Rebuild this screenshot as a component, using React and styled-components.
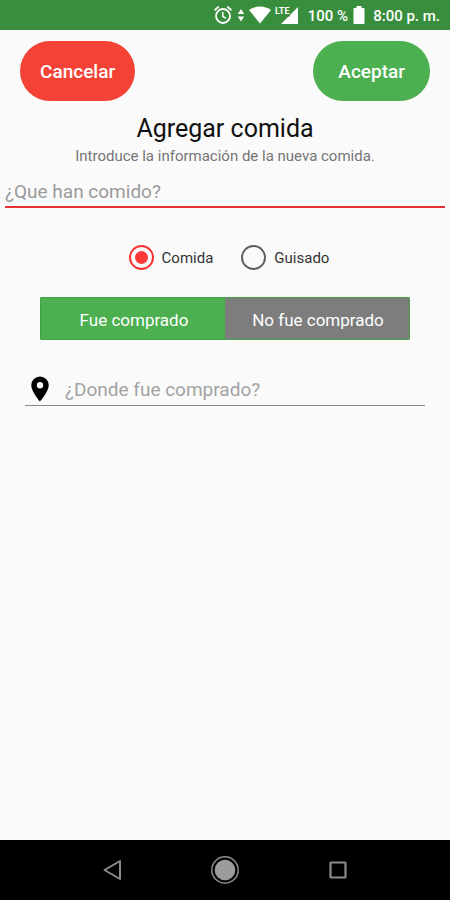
import React from "react";
import styled, { createGlobalStyle } from "styled-components";

const App = () => {
  const [type, setType] = React.useState("comida");
  const [bought, setBought] = React.useState(true);

  return (
    <Screen>
      <GlobalStyle />
      <StatusBar>
        <StatusIcons>
          <AlarmIcon />
          <DataIcon />
          <WifiIcon />
          <SignalIcon />
        </StatusIcons>
        <Percent>100 %</Percent>
        <BatteryIcon />
        <Clock>8:00 p. m.</Clock>
      </StatusBar>

      <Content>
        <Actions>
          <PillButton type="button" $color="#f44336">
            Cancelar
          </PillButton>
          <PillButton type="button" $color="#4caf50" $wide>
            Aceptar
          </PillButton>
        </Actions>

        <Title>Agregar comida</Title>
        <Subtitle>Introduce la información de la nueva comida.</Subtitle>
        <FoodInput aria-label="¿Que han comido?" placeholder="¿Que han comido?" />

        <RadioRow role="radiogroup" aria-label="Tipo">
          <RadioLabel>
            <Radio
              type="radio"
              name="type"
              checked={type === "comida"}
              onChange={() => setType("comida")}
            />
            Comida
          </RadioLabel>
          <RadioLabel>
            <Radio
              type="radio"
              name="type"
              checked={type === "guisado"}
              onChange={() => setType("guisado")}
            />
            Guisado
          </RadioLabel>
        </RadioRow>

        <Segment>
          <SegmentButton type="button" $on={bought} aria-pressed={bought} onClick={() => setBought(true)}>
            Fue comprado
          </SegmentButton>
          <SegmentButton type="button" $on={!bought} aria-pressed={!bought} onClick={() => setBought(false)}>
            No fue comprado
          </SegmentButton>
        </Segment>

        <PlaceRow>
          <PinIcon />
          <PlaceInput aria-label="¿Donde fue comprado?" placeholder="¿Donde fue comprado?" />
        </PlaceRow>
      </Content>

      <NavBar>
        <NavButton type="button" aria-label="Atrás">
          <svg width="28" height="28" viewBox="0 0 28 28">
            <path d="M22 5v18L6.500 14z" fill="none" stroke="#8c8c8c" strokeWidth="2" strokeLinejoin="round" />
          </svg>
        </NavButton>
        <NavButton type="button" aria-label="Inicio">
          <svg width="28" height="28" viewBox="0 0 28 28">
            <circle cx="14" cy="14" r="13.2" fill="none" stroke="#8c8c8c" strokeWidth="1.5" />
            <circle cx="14" cy="14" r="10.3" fill="#9c9c9c" />
          </svg>
        </NavButton>
        <NavButton type="button" aria-label="Recientes">
          <svg width="28" height="28" viewBox="0 0 28 28">
            <rect x="6.5" y="6.5" width="15" height="15" rx="0.5" fill="none" stroke="#8c8c8c" strokeWidth="2.2" />
          </svg>
        </NavButton>
      </NavBar>
    </Screen>
  );
};

const AlarmIcon = () => (
  <svg width="20" height="20" viewBox="0 0 20 20" fill="none" stroke="#fff" strokeWidth="1.8">
    <circle cx="10" cy="11" r="7" />
    <path d="M1.5 5.2 5.8 1.6M18.5 5.2 14.2 1.6" />
    <path d="M9.8 7v4.4l3.2 1.900" strokeWidth="1.5" />
  </svg>
);

const DataIcon = () => (
  <svg width="8" height="20" viewBox="0 0 8 20" fill="#fff">
    <path d="M4 4l3.2 5H.8zM4 16.5l3.2-5H.8z" />
  </svg>
);

const WifiIcon = () => (
  <svg width="22" height="20" viewBox="0 0 22 20" fill="#fff">
    <path d="M11 18.500 0 5C3 2.700 6.800 1.500 11 1.500S19 2.700 22 5z" />
  </svg>
);

// 신호 아이콘 위에 LTE 글자
const SignalIcon = () => (
  <svg width="24" height="20" viewBox="0 0 24 20" fill="#fff">
    <path d="M23 2v17H6l7.500-7.500H15V10z" />
    <text x="0" y="9" fontFamily="Liberation Sans Narrow, Roboto, sans-serif" fontSize="9" fontWeight="700">
      LTE
    </text>
  </svg>
);

const BatteryIcon = () => (
  <svg width="12" height="20" viewBox="0 0 12 20" fill="#fff">
    <path d="M3.500 1h5v2H10.500a1 1 0 0 1 1 1v14a1 1 0 0 1-1 1H1.500a1 1 0 0 1-1-1V4a1 1 0 0 1 1-1h2z" />
  </svg>
);

const PinIcon = () => (
  <svg width="18" height="26" viewBox="0 0 18 26">
    <path
      fillRule="evenodd"
      d="M9 .5A8.700 8.700 0 0 0 .3 9.200C.3 15.500 9 25.500 9 25.500s8.700-10 8.700-16.300A8.700 8.700 0 0 0 9 .5zM9 12.500a3.200 3.200 0 1 1 0-6.400 3.200 3.200 0 0 1 0 6.400z"
    />
  </svg>
);

const GlobalStyle = createGlobalStyle`
  * {
    box-sizing: border-box;
  }
  body {
    margin: 0;
    background-color: #fafafa;
    font-family: Roboto, "Liberation Sans", sans-serif;
  }
  button, input {
    font-family: inherit;
  }
`;

const Screen = styled.div`
  display: flex;
  flex-direction: column;
  min-height: 100vh;
`;

const StatusBar = styled.header`
  display: flex;
  align-items: center;
  justify-content: flex-end;
  height: 30px;
  padding: 0 10px;
  background-color: #388e3c;
  color: #fff;
  font-size: 15px;
  font-weight: 500;
`;

const StatusIcons = styled.div`
  display: flex;
  gap: 4px;
`;

const Percent = styled.span`
  margin: 2px 5px 0 9px;
`;

const Clock = styled.span`
  margin: 2px 0 0 8px;
`;

const Content = styled.main`
  display: flex;
  flex: 1;
  flex-direction: column;
  padding: 11px 5px 0;
`;

const Actions = styled.div`
  display: flex;
  justify-content: space-between;
  padding: 0 15px;
`;

const PillButton = styled.button`
  height: 60px;
  padding: 0 ${(props) => (props.$wide ? 25 : 20)}px;
  border: none;
  border-radius: 30px;
  background-color: ${(props) => props.$color};
  color: #fff;
  font-size: 19px;
  font-weight: 500;
`;

const Title = styled.h1`
  margin: 13px 0 0;
  color: #111;
  font-size: 25px;
  font-weight: 400;
  line-height: 30px;
  text-align: center;
`;

const Subtitle = styled.p`
  margin: 3px 0 0;
  color: #757575;
  font-size: 15px;
  line-height: 18px;
  text-align: center;
`;

const FoodInput = styled.input`
  width: 100%;
  height: 38px;
  margin-top: 5px;
  padding: 6px 0 0;
  border: none;
  border-bottom: 2px solid #e53035;
  outline: none;
  background: transparent;
  font-size: 19px;

  &::placeholder {
    color: #9a9a9a;
  }
`;

const RadioRow = styled.div`
  display: flex;
  justify-content: center;
  gap: 28px;
  margin-top: 37px;
  padding-left: 8px;
`;

const RadioLabel = styled.label`
  display: flex;
  align-items: center;
  gap: 8px;
  color: #333;
  font-size: 15px;
`;

const Radio = styled.input`
  display: grid;
  place-items: center;
  width: 25px;
  height: 25px;
  margin: 0;
  border: 2px solid #5f5f5f;
  border-radius: 50%;
  appearance: none;

  &:checked {
    border-color: #f9302f;
  }
  &:checked::before {
    content: "";
    width: 13px;
    height: 13px;
    border-radius: 50%;
    background-color: #fb3b3a;
  }
`;

const Segment = styled.div`
  display: flex;
  height: 43px;
  margin: 27px 35px 0;
  border: 1px solid #43a047;
  border-radius: 1px;
`;

const SegmentButton = styled.button`
  flex: 1;
  padding: 2px 0 0 2px;
  border: none;
  background-color: ${(props) => (props.$on ? "#4caf50" : "#7d7d7d")};
  color: #fff;
  font-size: 17px;
`;

const PlaceRow = styled.div`
  display: flex;
  align-items: center;
  gap: 16px;
  height: 38px;
  margin: 28px 20px 0;
  padding: 4px 0 0 6px;
  border-bottom: 1px solid #8a8a8a;
`;

const PlaceInput = styled.input`
  flex: 1;
  min-width: 0;
  padding: 2px 0 0;
  border: none;
  outline: none;
  background: transparent;
  font-size: 19px;

  &::placeholder {
    color: #a3a3a3;
  }
`;

const NavBar = styled.nav`
  display: flex;
  align-items: center;
  height: 60px;
  padding: 0 56px;
  background-color: #000;
`;

const NavButton = styled.button`
  display: flex;
  flex: 1;
  justify-content: center;
  padding: 0;
  border: none;
  background: none;
`;

export default App;
